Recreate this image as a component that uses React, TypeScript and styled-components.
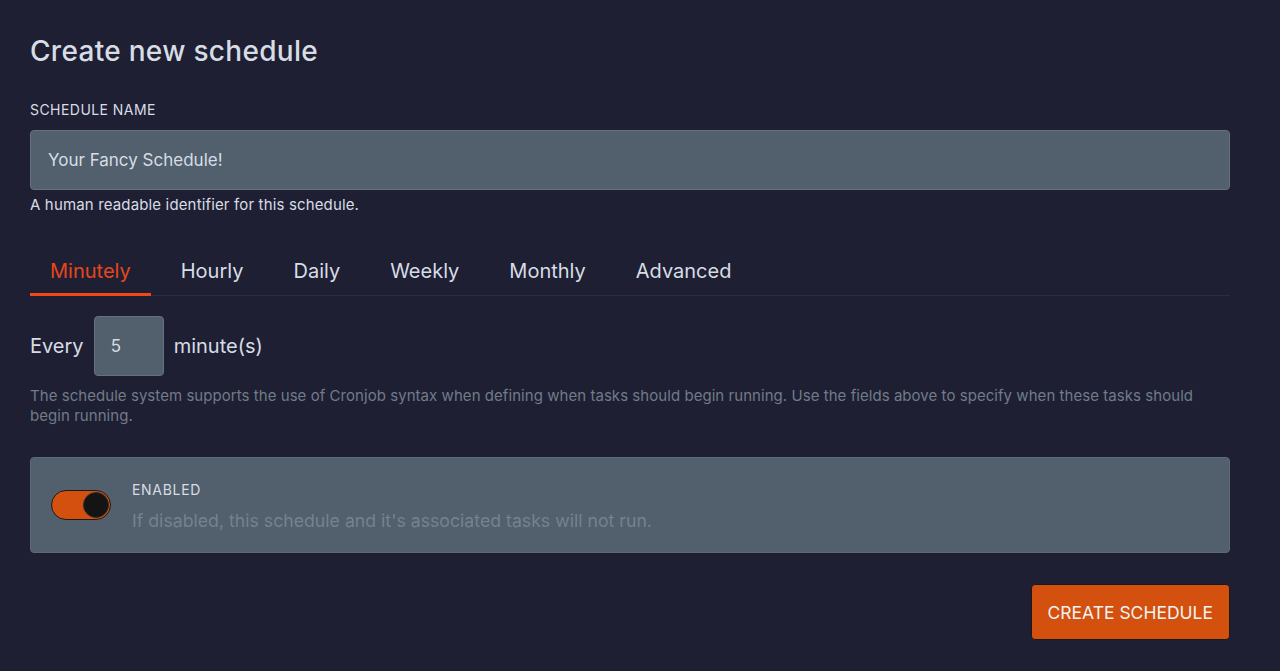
import React, { useState } from "react";
import styled, { createGlobalStyle } from "styled-components";

const Global = createGlobalStyle`
  html, body { margin: 0; padding: 0; background: #1f1f33; }
  body { font-family: Inter, "Noto Sans", sans-serif; color: #d6dde4; }
  * { box-sizing: border-box; }
`;

const Page = styled.div`
  min-height: 671px;
  padding: 30px 50px 30px 30px;
  display: flex;
  flex-direction: column;
`;

const Title = styled.h1`
  margin: 0;
  font-size: 28px;
  font-weight: 500;
  letter-spacing: 0.3px;
  line-height: 42px;
  color: #d6dde4;
`;

const Label = styled.div`
  margin-top: 28px;
  font-size: 14px;
  letter-spacing: 0.45px;
  line-height: 20px;
  text-transform: uppercase;
  color: #d6dde4;
`;

const TextInput = styled.input`
  margin-top: 10px;
  height: 60px;
  width: 100%;
  background: #525f6c;
  border: 1px solid #66727e;
  border-radius: 4px;
  padding: 0 17px;
  font-family: inherit;
  font-size: 17px;
  color: #d6dde4;
  outline: none;
`;

const Help = styled.div`
  margin-top: 5px;
  font-size: 15px;
  letter-spacing: 0.15px;
  line-height: 20px;
  color: #d6dde4;
`;

const Tabs = styled.div`
  margin-top: 31px;
  display: flex;
  gap: 10px;
  border-bottom: 1px solid #2c2c40;
`;

const Tab = styled.div<{ $active?: boolean }>`
  padding: 2px 20px 0;
  height: 50px;
  display: flex;
  align-items: center;
  font-size: 20px;
  color: ${(p) => (p.$active ? "#e5471b" : "#d6dde4")};
  border-bottom: 3px solid ${(p) => (p.$active ? "#ef4a16" : "transparent")};
  margin-bottom: -1px;
  cursor: pointer;
`;

const EveryRow = styled.div`
  margin-top: 20px;
  display: flex;
  align-items: center;
  gap: 10px;
  font-size: 20px;
`;

const NumBox = styled.input`
  width: 70px;
  height: 60px;
  background: #525f6c;
  border: 1px solid #66727e;
  border-radius: 4px;
  padding: 0 16px;
  font-family: inherit;
  font-size: 17px;
  color: #d6dde4;
  outline: none;
`;

const Desc = styled.p`
  margin: 10px 0 0;
  font-size: 15px;
  letter-spacing: 0.05px;
  line-height: 20px;
  color: #6f7c89;
`;

const EnabledCard = styled.div`
  margin-top: 31px;
  height: 96px;
  background: #525f6c;
  border: 1px solid #5d6975;
  border-radius: 4px;
  display: flex;
  align-items: center;
  padding: 0 20px;
  gap: 21px;
`;

const Switch = styled.div<{ $on: boolean }>`
  position: relative;
  width: 60px;
  height: 30px;
  border-radius: 15px;
  background: ${(p) => (p.$on ? "#d4500f" : "#3a4450")};
  border: 1px solid #1a1a1a;
  flex-shrink: 0;
  cursor: pointer;
`;

const Knob = styled.div<{ $on: boolean }>`
  position: absolute;
  top: 1px;
  left: ${(p) => (p.$on ? "31px" : "1px")};
  width: 26px;
  height: 26px;
  border-radius: 50%;
  background: #141414;
  border: 1px solid #2a2a2a;
`;

const CardText = styled.div`
  display: flex;
  flex-direction: column;
  gap: 10px;
  margin-top: 2px;
`;

const CardLabel = styled.div`
  font-size: 14px;
  letter-spacing: 0.7px;
  line-height: 20px;
  text-transform: uppercase;
  color: #d6dde4;
`;

const CardHint = styled.div`
  font-size: 17.7px;
  line-height: 22px;
  color: #75828f;
`;

const Footer = styled.div`
  margin-top: 31px;
  display: flex;
  justify-content: flex-end;
`;

const Button = styled.button`
  height: 56px;
  padding: 0 16px;
  background: #d4500f;
  border: 1px solid #1a1a1a;
  border-radius: 4px;
  font-family: inherit;
  font-size: 17.5px;
  color: #f3f3f3;
  text-transform: uppercase;
  cursor: pointer;
`;

const tabs = ["Minutely", "Hourly", "Daily", "Weekly", "Monthly", "Advanced"];

export default function App() {
  const [active, setActive] = useState(0);
  const [on, setOn] = useState(true);
  return (
    <>
      <Global />
      <Page>
        <Title>Create new schedule</Title>
        <Label>Schedule Name</Label>
        <TextInput defaultValue="Your Fancy Schedule!" />
        <Help>A human readable identifier for this schedule.</Help>
        <Tabs>
          {tabs.map((t, i) => (
            <Tab key={t} $active={i === active} onClick={() => setActive(i)}>
              {t}
            </Tab>
          ))}
        </Tabs>
        <EveryRow>
          <span>Every</span>
          <NumBox defaultValue="5" />
          <span>minute(s)</span>
        </EveryRow>
        <Desc>
          The schedule system supports the use of Cronjob syntax when defining when tasks should begin running. Use the
          fields above to specify when these tasks should begin running.
        </Desc>
        <EnabledCard>
          <Switch $on={on} onClick={() => setOn(!on)}>
            <Knob $on={on} />
          </Switch>
          <CardText>
            <CardLabel>Enabled</CardLabel>
            <CardHint>If disabled, this schedule and it's associated tasks will not run.</CardHint>
          </CardText>
        </EnabledCard>
        <Footer>
          <Button>Create Schedule</Button>
        </Footer>
      </Page>
    </>
  );
}
